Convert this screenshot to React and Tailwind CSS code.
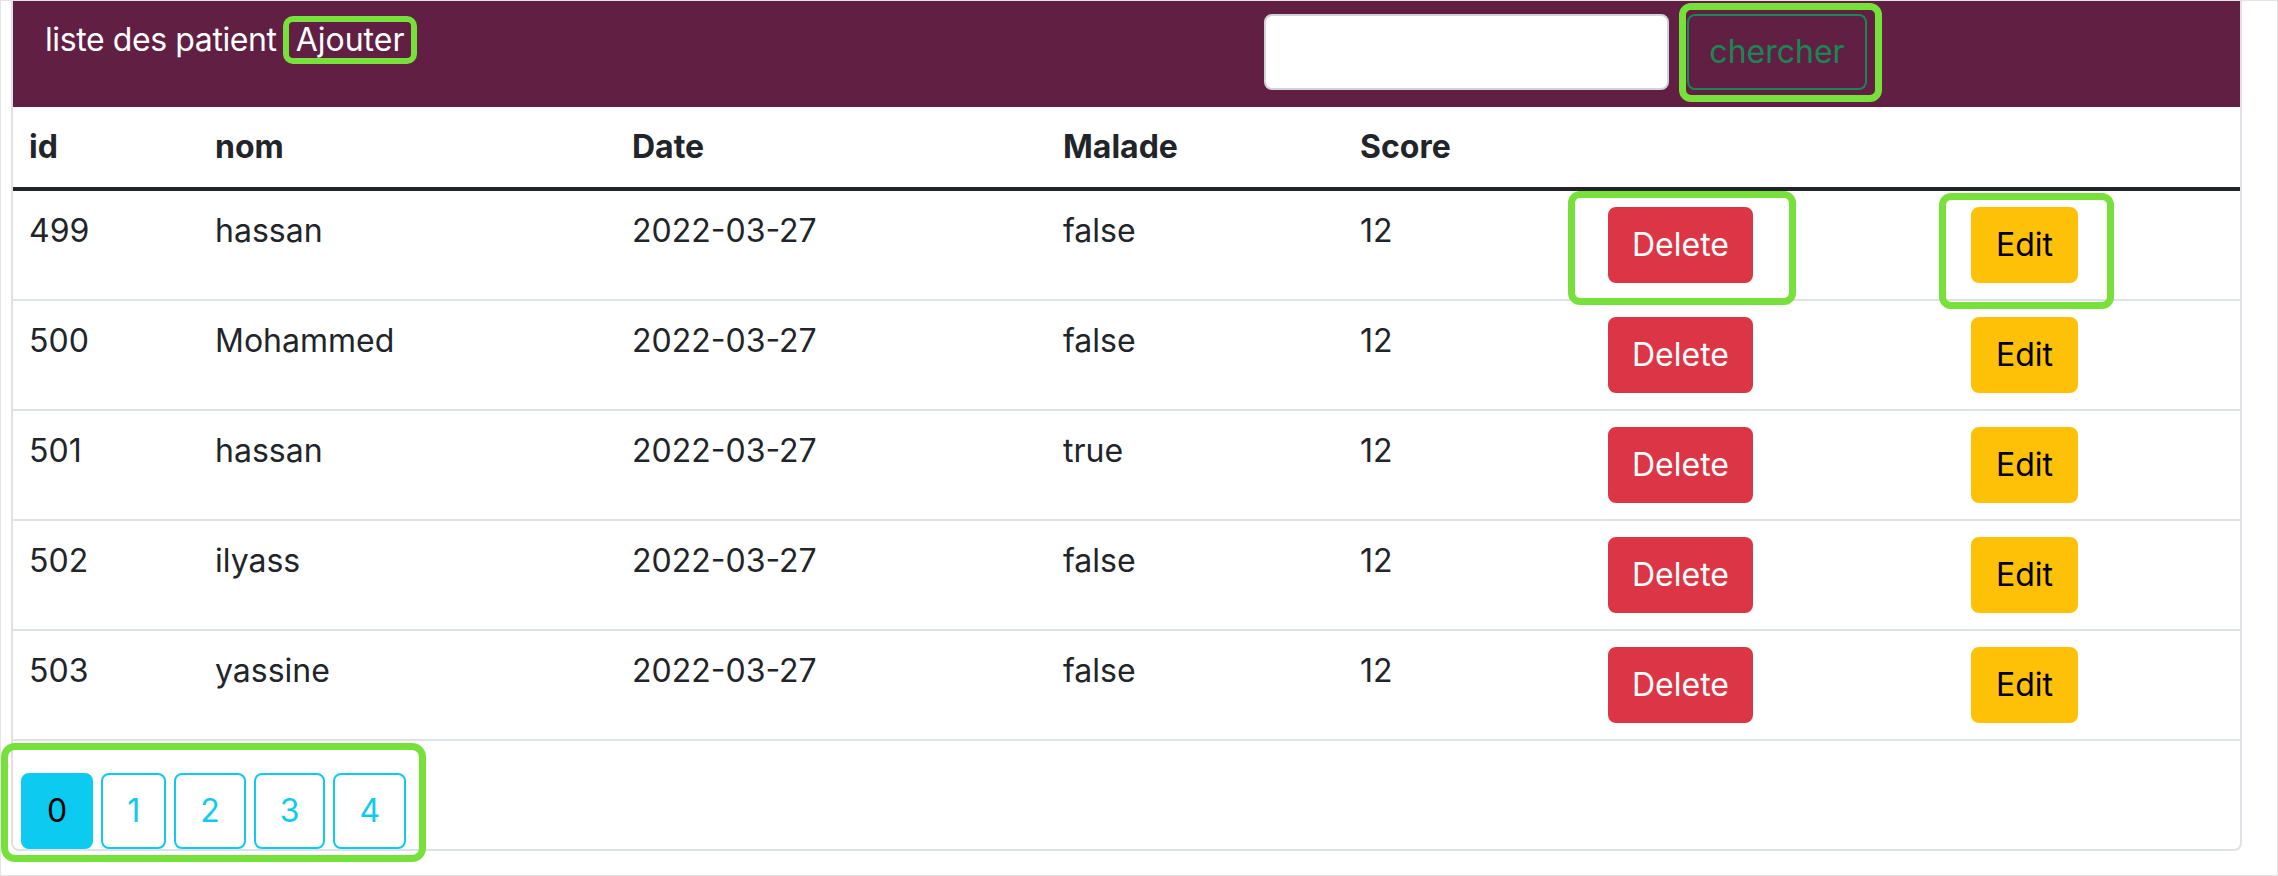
import React from "react";

const patients = [
  { id: 499, nom: "hassan", date: "2022-03-27", malade: "false", score: 12 },
  { id: 500, nom: "Mohammed", date: "2022-03-27", malade: "false", score: 12 },
  { id: 501, nom: "hassan", date: "2022-03-27", malade: "true", score: 12 },
  { id: 502, nom: "ilyass", date: "2022-03-27", malade: "false", score: 12 },
  { id: 503, nom: "yassine", date: "2022-03-27", malade: "false", score: 12 },
];

// green annotation frame drawn over an element
function Mark({ className }) {
  return (
    <span
      className={
        "pointer-events-none absolute z-10 rounded-[12px] border-[7px] border-[#78e03a] " +
        className
      }
    />
  );
}

export default function App() {
  return (
    <div className="h-[876px] w-[2278px] border border-[#e4e4e4] bg-white font-['Inter','Liberation_Sans',sans-serif] text-[32px] leading-[48px] text-[#212529]">
      <div className="ml-[10px] w-[2231px] rounded-b-[8px] border-x-2 border-b-2 border-[#dee2e6]">
        <div className="flex h-[106px] bg-[#611f43] pl-[32px]">
          <div className="w-[1219px] pt-[15px] text-white">
            <div className="flex h-[48px] items-center">
              <span className="tracking-[-0.4px]">liste des patient</span>
              <span className="ml-[6px] flex h-[48px] items-center rounded-[10px] border-[6px] border-[#78e03a] px-[7px] leading-[36px]">
                Ajouter
              </span>
            </div>
          </div>
          <input
            type="text"
            className="mt-[13px] h-[76px] w-[405px] rounded-[8px] border-2 border-[#ced4da] bg-white px-[24px] outline-none"
          />
          <div className="relative ml-[18px] mt-[13px] h-[76px]">
            <button className="h-[76px] w-[180px] rounded-[8px] border-2 border-[#198754] py-[12px] text-[#198754]">
              chercher
            </button>
            <Mark className="-left-[8px] -right-[15px] -top-[11px] -bottom-[12px]" />
          </div>
        </div>

        <table className="w-full table-fixed border-collapse">
          <colgroup>
            <col className="w-[186px]" />
            <col className="w-[417px]" />
            <col className="w-[431px]" />
            <col className="w-[297px]" />
            <col className="w-[248px]" />
            <col className="w-[363px]" />
            <col className="w-[285px]" />
          </colgroup>
          <thead>
            <tr className="border-b-[4px] border-[#212529]">
              <th className="px-[16px] py-[16px] text-left align-top font-bold">id</th>
              <th className="px-[16px] py-[16px] text-left align-top font-bold">nom</th>
              <th className="px-[16px] py-[16px] text-left align-top font-bold">Date</th>
              <th className="px-[16px] py-[16px] text-left align-top font-bold">Malade</th>
              <th className="px-[16px] py-[16px] text-left align-top font-bold">Score</th>
              <th className="px-[16px] py-[16px]"></th>
              <th className="px-[16px] py-[16px]"></th>
            </tr>
          </thead>
          <tbody>
            {patients.map((p, i) => (
              <tr key={p.id} className="border-b-2 border-[#dee2e6]">
                <td className="px-[16px] py-[16px] align-top">{p.id}</td>
                <td className="px-[16px] py-[16px] align-top">{p.nom}</td>
                <td className="px-[16px] py-[16px] align-top">{p.date}</td>
                <td className="px-[16px] py-[16px] align-top">{p.malade}</td>
                <td className="px-[16px] py-[16px] align-top">{p.score}</td>
                <td className="px-[16px] py-[16px] align-top">
                  <div className="relative inline-block">
                    <button className="h-[76px] rounded-[8px] border-2 border-[#dc3545] bg-[#dc3545] px-[22px] py-[12px] text-white">
                      Delete
                    </button>
                    {i === 0 && (
                      <Mark className="-left-[40px] -right-[43px] -top-[16px] -bottom-[22px]" />
                    )}
                  </div>
                </td>
                <td className="px-[16px] py-[16px] align-top">
                  <div className="relative inline-block">
                    <button className="h-[76px] rounded-[8px] border-2 border-[#ffc107] bg-[#ffc107] px-[23px] py-[12px] text-black">
                      Edit
                    </button>
                    {i === 0 && (
                      <Mark className="-left-[32px] -right-[36px] -top-[14px] -bottom-[26px]" />
                    )}
                  </div>
                </td>
              </tr>
            ))}
          </tbody>
        </table>

        <div className="pt-[32px]">
          <div className="relative inline-flex">
            {[0, 1, 2, 3, 4].map((n) => (
              <button
                key={n}
                className={
                  n === 0
                    ? "ml-[8px] h-[76px] rounded-[8px] border-2 border-[#0dcaf0] bg-[#0dcaf0] px-[24px] py-[12px] text-black"
                    : "ml-[8px] h-[76px] rounded-[8px] border-2 border-[#0dcaf0] bg-white px-[24px] py-[12px] text-[#0dcaf0]"
                }
              >
                {n}
              </button>
            ))}
            <Mark className="-left-[12px] -right-[20px] -top-[30px] -bottom-[13px] rounded-[14px]" />
          </div>
        </div>
      </div>
    </div>
  );
}
